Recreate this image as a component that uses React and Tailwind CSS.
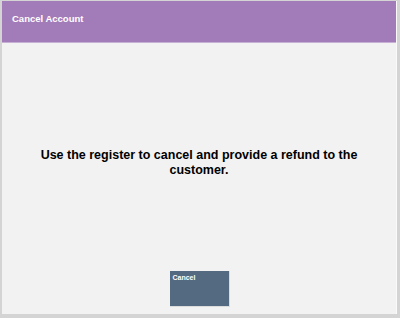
export default function App() {
  return (
    <div className="w-[400px] h-[318px] bg-[#d4d4d4] flex flex-col" style={{ fontFamily: '"Liberation Sans", Arial, sans-serif' }}>
      <div className="flex-1 flex flex-col ml-[2px] mr-[3px] mt-[1px] mb-[4px] bg-[#f2f2f2] border-r border-[#fafafa]">
        {/* Header */}
        <div className="h-[42px] bg-[#a27bb9] border-b border-[#c6b0d3] px-[10px] pt-[13px]">
          <p className="text-white font-bold text-[9.5px] leading-[10px]">Cancel Account</p>
        </div>

        {/* Message */}
        <div className="flex-1 flex items-center justify-center px-8 pt-[12px]">
          <p className="text-black font-bold text-[12.5px] leading-[15px] text-center">
            Use the register to cancel and provide a refund to the customer.
          </p>
        </div>

        {/* Button */}
        <div className="flex justify-center pb-[7px]">
          <button className="w-[60px] h-[36px] ml-[1px] bg-[#546a80] border-r border-b border-[#dcdcdc] text-white font-bold text-[7px] text-left px-[3px] pt-[2px] flex items-start">
            Cancel
          </button>
        </div>
      </div>
    </div>
  )
}
